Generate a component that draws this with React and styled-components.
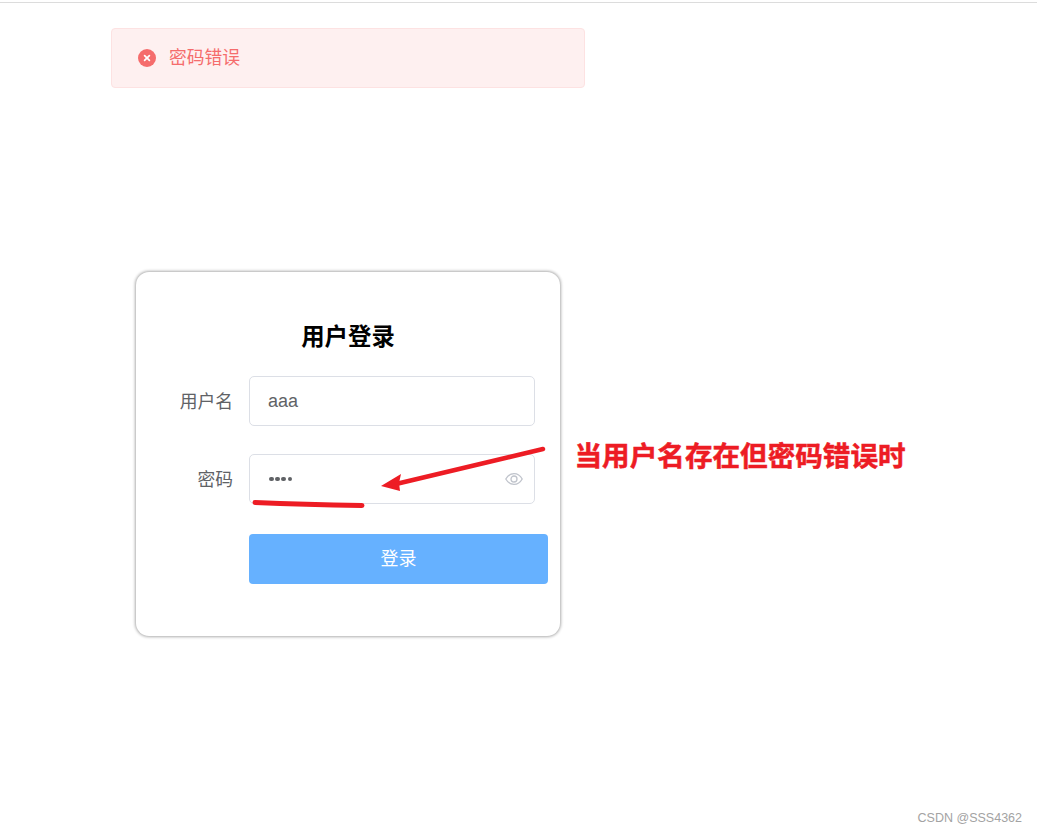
import React from "react";
import styled, { createGlobalStyle } from "styled-components";

const FONT = `"Liberation Sans", Arial, "Noto Sans CJK SC", sans-serif`;

const Global = createGlobalStyle`
  html, body { margin: 0; padding: 0; background: #fff; }
  body { font-family: ${FONT}; }
  #root { min-height: 833px; }
`;

const Page = styled.div`
  position: relative;
  width: 1037px;
  height: 833px;
  overflow: hidden;
  padding-top: 2px;
  box-sizing: border-box;
`;

const TopRule = styled.div`
  height: 1px;
  background: #dcdcdc;
`;

const Alert = styled.div`
  display: flex;
  align-items: center;
  gap: 13px;
  width: 474px;
  height: 60px;
  box-sizing: border-box;
  margin: 25px 0 0 111px;
  padding-left: 26px;
  background: #fef0f0;
  border: 1px solid #fde2e2;
  border-radius: 4px;
  color: #f56c6c;
  font-size: 17.8px;
  line-height: 1;
`;

const AlertText = styled.span`
  padding-top: 2px;
`;

const Card = styled.section`
  width: 424px;
  height: 364px;
  box-sizing: border-box;
  margin: 184px 0 0 136px;
  padding-top: 52px;
  border-radius: 13px;
  background: #fff;
  box-shadow: 0 0 3px 1px rgba(0, 0, 0, 0.32);
`;

const Title = styled.h2`
  margin: 0 0 25px;
  height: 27px;
  line-height: 27px;
  text-align: center;
  font-size: 23.4px;
  font-weight: 700;
  color: #000;
`;

const Row = styled.div`
  display: flex;
  align-items: center;
  height: 50px;
  margin-bottom: 28px;
`;

const Label = styled.label`
  width: 97px;
  margin-right: 16px;
  margin-top: -2px;
  text-align: right;
  font-size: 17.8px;
  color: #606266;
`;

const InputBox = styled.div`
  display: flex;
  align-items: center;
  justify-content: space-between;
  width: 286px;
  height: 50px;
  box-sizing: border-box;
  padding: 0 11px 0 18px;
  border: 1px solid #dcdfe6;
  border-radius: 5px;
  background: #fff;
  color: #606266;
  font-size: 18px;
`;

const Dots = styled.span`
  display: flex;
  gap: 1.6px;
  padding-left: 1px;
`;

const Dot = styled.i`
  display: block;
  width: 4.6px;
  height: 4.6px;
  border-radius: 50%;
  background: #606266;
`;

const Submit = styled.button`
  display: block;
  width: 299px;
  height: 50px;
  margin: 30px 0 0 113px;
  padding: 0 0 4px;
  border: 0;
  border-radius: 4px;
  background: #66b1ff;
  color: #fff;
  font-family: inherit;
  font-size: 18px;
`;

const Annotation = styled.div`
  position: absolute;
  left: 574.500px;
  top: 440px;
  font-size: 27.6px;
  line-height: 34px;
  font-weight: 700;
  color: #ed1c24;
  -webkit-text-stroke: 0.5px #ed1c24;
  white-space: nowrap;
`;

const Ink = styled.svg`
  position: absolute;
  left: 0;
  top: 0;
  pointer-events: none;
`;

const Watermark = styled.div`
  position: absolute;
  right: 15px;
  top: 811px;
  font-size: 12.5px;
  line-height: 14px;
  color: #a3a3a3;
`;

const ErrorIcon = () => (
  <svg width="18" height="18" viewBox="0 0 18 18">
    <circle cx="9" cy="9" r="9" fill="#f56c6c" />
    <path d="M6.600 6.600l4.800 4.800M11.400 6.600l-4.800 4.800" stroke="#fff" strokeWidth="1.7" strokeLinecap="round" />
  </svg>
);

const EyeIcon = () => (
  <svg width="18" height="14" viewBox="0 0 18 14" fill="none" stroke="#c0c4cc" strokeWidth="1.3">
    <path d="M.8 7C2.800 3.400 5.600 1.600 9 1.600s6.200 1.800 8.200 5.400c-2 3.600-4.800 5.400-8.200 5.400S2.800 10.600.8 7z" />
    <circle cx="9" cy="7" r="3" />
  </svg>
);

export default function App() {
  return (
    <Page>
      <Global />
      <TopRule />
      <Alert>
        <ErrorIcon />
        <AlertText>密码错误</AlertText>
      </Alert>
      <Card>
        <Title>用户登录</Title>
        <Row>
          <Label>用户名</Label>
          <InputBox>aaa</InputBox>
        </Row>
        <Row>
          <Label>密码</Label>
          <InputBox>
            <Dots>
              <Dot /><Dot /><Dot /><Dot />
            </Dots>
            <EyeIcon />
          </InputBox>
        </Row>
        <Submit>登录</Submit>
      </Card>
      <Ink width="1037" height="833" viewBox="0 0 1037 833">
        <path d="M543 449L396 484" stroke="#ed1c24" strokeWidth="4.500" strokeLinecap="round" fill="none" />
        <path d="M381 486L401 474L399 483L400 491Z" fill="#ed1c24" />
        <path d="M255 502.500C290 504 330 505 362 505.500" stroke="#ed1c24" strokeWidth="5" strokeLinecap="round" fill="none" />
      </Ink>
      <Annotation>当用户名存在但密码错误时</Annotation>
      <Watermark>CSDN @SSS4362</Watermark>
    </Page>
  );
}
